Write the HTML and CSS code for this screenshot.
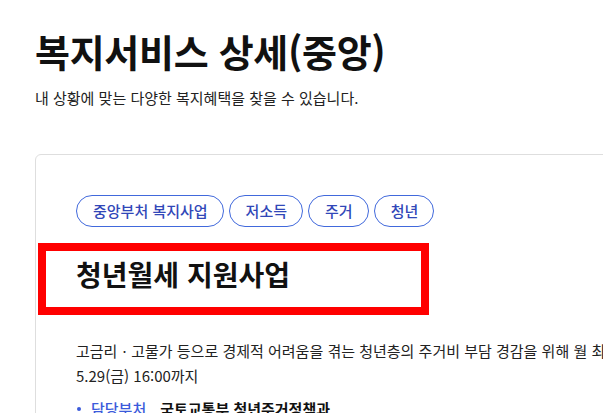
FILE: index.html
```html
<!DOCTYPE html>
<html lang="ko">
<head>
    <meta charset="UTF-8">
    <meta name="viewport" content="width=device-width, initial-scale=1.0">
    <title>복지서비스 상세(중앙)</title>
    <link rel="stylesheet" href="styles.css">
</head>
<body>

<main class="page">
    <h1 class="page-title">복지서비스 상세(중앙)</h1>
    <p class="page-desc">내 상황에 맞는 다양한 복지혜택을 찾을 수 있습니다.</p>

    <section class="card">
        <ul class="tags">
            <li class="tag">중앙부처 복지사업</li>
            <li class="tag">저소득</li>
            <li class="tag">주거</li>
            <li class="tag">청년</li>
        </ul>

        <h2 class="service-name">청년월세 지원사업</h2>

        <p class="service-summary">
            고금리ㆍ고물가 등으로 경제적 어려움을 겪는 청년층의 주거비 부담 경감을 위해 월 최대 20만원을 지원합니다. 신청기간: 2026.2.23(월) ~<br>
            5.29(금) 16:00까지
        </p>

        <ul class="service-info">
            <li><span class="info-label">담당부처</span><strong>국토교통부 청년주거정책과</strong></li>
            <li><span class="info-label">문의처</span><strong>마이홈 콜센터 1600-1004</strong></li>
        </ul>
    </section>
</main>

</body>
</html>
```

FILE: styles.css
```css
html, body {
    margin: 0;
    padding: 0;
    overflow: hidden;
    background-color: #fff;
}
body {
    font-family: "Noto Sans CJK KR", "Noto Sans", sans-serif;
    color: #111;
}
.page {
    padding: 28px 0 0 35px;
}
.page-title {
    margin: 0;
    font-size: 38px;
    line-height: 46px;
    font-weight: 700;
    letter-spacing: -0.3px;
    color: #111;
}
.page-desc {
    margin: 14px 0 0;
    font-size: 15px;
    line-height: 20px;
    color: #222;
}

.card {
    width: 960px;
    margin-top: 46px;
    padding: 40px 40px 40px;
    border: 1px solid #dedede;
    border-radius: 6px;
}
.tags {
    display: flex;
    gap: 5px;
    margin: 0;
    padding: 0;
    list-style: none;
}
.tag {
    height: 32px;
    box-sizing: border-box;
    padding: 0 15px 0 16px;
    border: 1px solid #4169dc;
    border-radius: 16px;
    font-size: 15px;
    line-height: 30px;
    font-weight: 500;
    color: #3147b8;
    white-space: nowrap;
}

.service-name {
    position: relative;
    margin: 30px 0 0;
    font-size: 28px;
    line-height: 34px;
    font-weight: 700;
    color: #111;
}
/* 강조 표시 박스 */
.service-name::after {
    content: "";
    position: absolute;
    top: -14px;
    left: -38px;
    width: 391px;
    height: 72px;
    box-sizing: border-box;
    border: 8px solid #ff0000;
}

.service-summary {
    margin: 47px 0 0;
    font-size: 15px;
    line-height: 25px;
    color: #222;
    white-space: nowrap;
}

.service-info {
    margin: 8px 0 0;
    padding: 0;
    list-style: none;
    font-size: 15px;
    line-height: 25px;
}
.service-info li {
    display: flex;
    align-items: center;
}
.service-info li::before {
    content: "";
    width: 4px;
    height: 4px;
    margin: 0 10px 0 1px;
    border-radius: 50%;
    background-color: #3b5bdb;
}
.info-label {
    margin-right: 14px;
    color: #3b5bdb;
    font-weight: 500;
}
.service-info strong {
    color: #111;
    font-weight: 700;
}
```
